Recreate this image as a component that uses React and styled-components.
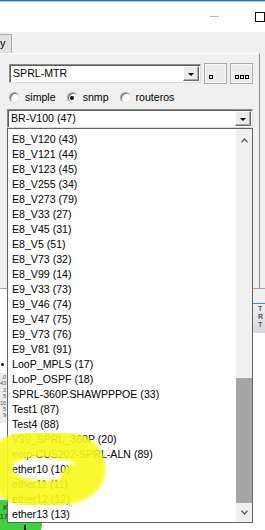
import React from 'react'
import styled, { createGlobalStyle } from 'styled-components'

const GlobalStyle = createGlobalStyle`
  *, *::before, *::after { box-sizing: border-box; }
  html, body { margin: 0; padding: 0; background: #fff; }
  body { width: 265px; height: 530px; overflow: hidden; }
`

const interfaces = [
  'E8_V120 (43)', 'E8_V121 (44)', 'E8_V123 (45)', 'E8_V255 (34)', 'E8_V273 (79)',
  'E8_V33 (27)', 'E8_V45 (31)', 'E8_V5 (51)', 'E8_V73 (32)', 'E8_V99 (14)',
  'E9_V33 (73)', 'E9_V46 (74)', 'E9_V47 (75)', 'E9_V73 (76)', 'E9_V81 (91)',
  'LooP_MPLS (17)', 'LooP_OSPF (18)', 'SPRL-360P.SHAWPPPOE (33)', 'Test1 (87)', 'Test4 (88)',
  'V99_SPRL_360P (20)', 'eoip-CUS202-SPRL-ALN (89)', 'ether10 (10)', 'ether11 (11)', 'ether12 (12)',
  'ether13 (13)',
]

function App() {
  return (
    <Screen>
      <GlobalStyle />
      <TitleBar>
        <MinDash />
        <MaxBox />
      </TitleBar>

      <Dialog>
        <TabStrip>
          <Tab>y</Tab>
        </TabStrip>
        <Panel>
          <Row>
            <Combo $w={192}>
              <ComboText>SPRL-MTR</ComboText>
              <DropBtn><Arrow /></DropBtn>
            </Combo>
            <SquareBtn><Glyph /></SquareBtn>
            <SquareBtn><Glyph /><Glyph /><Glyph /></SquareBtn>
          </Row>
          <RadioRow>
            <RadioLabel><RadioDot />simple</RadioLabel>
            <RadioLabel><RadioDot $checked />snmp</RadioLabel>
            <RadioLabel><RadioDot />routeros</RadioLabel>
          </RadioRow>
          <Combo $w={246} $ml={-2} $mt={5}>
            <ComboText>BR-V100 (47)</ComboText>
            <DropBtn><Arrow /></DropBtn>
          </Combo>
        </Panel>
      </Dialog>

      <Canvas>
        <MapDot style={{ left: 1, top: 74 }} />
        <TinyNode style={{ left: -22, top: 84 }}>
          <span>.0</span><span>43</span><span>2</span><span>5</span><span>16</span><span>5</span><span>9</span>
        </TinyNode>
        <GreenNode style={{ left: -32, top: 211 }}>
          <span>K</span><span>17</span>
        </GreenNode>
        <NodeTick style={{ left: 24, top: 236 }} />
        <RightPane>
          <GreyBand />
          <BlueRule />
          <HeaderBand>
            <b>T</b><b>R</b><b>T</b>
          </HeaderBand>
        </RightPane>
      </Canvas>

      <DropList>
        <Items>
          {interfaces.map((name) => (
            <Item key={name}>{name}</Item>
          ))}
        </Items>
        <ScrollBar>
          <ScrollArrow $up>
            <svg width="7" height="5" viewBox="0 0 7 5">
              <polyline points="0.5,4.2 3.5,1 6.5,4.2" fill="none" stroke="#606060" strokeWidth="1.4" />
            </svg>
          </ScrollArrow>
          <Track>
            <Thumb />
          </Track>
          <ScrollArrow>
            <svg width="7" height="5" viewBox="0 0 7 5">
              <polyline points="0.5,0.8 3.5,4 6.5,0.8" fill="none" stroke="#606060" strokeWidth="1.4" />
            </svg>
          </ScrollArrow>
        </ScrollBar>
      </DropList>

      <Highlight viewBox="0 0 265 530" width="265" height="530">
        <defs>
          <filter id="soft" x="-20%" y="-20%" width="140%" height="140%">
            <feGaussianBlur stdDeviation="1.4" />
          </filter>
        </defs>
        <g filter="url(#soft)" opacity="0.9" fill="none" stroke="#f9f91c" strokeLinecap="round">
          <path
            d="M 74 478 C 95 476 99 450 68 446 C 40 441 6 443 0 462 C -5 481 14 495 44 494 C 72 493 93 486 92 468 C 91 454 78 447 60 446"
            strokeWidth="27"
          />
          <path d="M 68 476 C 76 480 82 484 86 488" strokeWidth="9" />
        </g>
      </Highlight>
    </Screen>
  )
}

export default App

const Screen = styled.div`
  position: relative;
  width: 265px;
  height: 530px;
  overflow: hidden;
  display: flex;
  flex-direction: column;
  background: #fff;
  font-family: "Liberation Sans", Arial, sans-serif;
  font-size: 10.6px;
  color: #000;
`

const TitleBar = styled.div`
  flex: none;
  height: 32px;
  border-top: 1px solid #2f74c2;
  box-shadow: inset 0 1px 0 #a9c8ea;
  background: #fff;
  display: flex;
  align-items: center;
  padding-left: 210px;
  gap: 36px;
`

const MinDash = styled.span`
  width: 10px;
  height: 1px;
  background: #b9b9b9;
`

const MaxBox = styled.span`
  flex: none;
  width: 10px;
  height: 10px;
  border: 1px solid #111;
`

const Dialog = styled.div`
  flex: none;
  height: 257px;
  background: #f0f0f0;
  border-bottom: 1px solid #a3a3a3;
  display: flex;
  flex-direction: column;
`

const TabStrip = styled.div`
  height: 21px;
  display: flex;
  align-items: flex-end;
`

const Tab = styled.div`
  width: 12px;
  height: 19px;
  background: #e2e2e2;
  border: 1px solid #adadad;
  border-left: none;
  border-bottom: none;
  line-height: 17px;
  padding-left: 0;
  font-size: 11px;
`

const Panel = styled.div`
  flex: 1;
  width: 260px;
  border-top: 1px solid #fff;
  border-right: 1px solid #8f8f8f;
  padding: 9px 0 0 9px;
  display: flex;
  flex-direction: column;
`

const Row = styled.div`
  display: flex;
  align-items: center;
  gap: 3px;
  height: 21px;
`

const Combo = styled.div`
  width: ${(p) => p.$w}px;
  height: 19px;
  margin-left: ${(p) => p.$ml || 0}px;
  margin-top: ${(p) => p.$mt || 0}px;
  display: flex;
  align-items: stretch;
  justify-content: space-between;
  background: #fff;
  border: 1px solid;
  border-color: #8a8a8a #dcdcdc #dcdcdc #8a8a8a;
  box-shadow: inset 1px 1px 0 #5e5e5e;
  padding: 1px 1px 1px 2px;
`

const ComboText = styled.span`
  line-height: 15px;
  padding-left: 1px;
  white-space: nowrap;
`

const DropBtn = styled.span`
  width: 16px;
  display: flex;
  align-items: center;
  justify-content: center;
  background: #ececec;
  border: 1px solid;
  border-color: #fdfdfd #6a6a6a #6a6a6a #fdfdfd;
  box-shadow: inset -1px -1px 0 #a8a8a8;
`

const Arrow = styled.span`
  width: 0;
  height: 0;
  margin-top: 1px;
  border-left: 3px solid transparent;
  border-right: 3px solid transparent;
  border-top: 3px solid #000;
`

const SquareBtn = styled.span`
  width: 23px;
  height: 21px;
  display: flex;
  align-items: flex-end;
  gap: 1px;
  padding: 0 0 4px 4px;
  background: #ebebeb;
  border: 1px solid #ababab;
  box-shadow: inset 0 0 0 1px #f7f7f7;
`

const Glyph = styled.span`
  width: 4px;
  height: 4px;
  border: 1px solid #000;
`

const RadioRow = styled.div`
  display: flex;
  align-items: center;
  gap: 11px;
  height: 13px;
  margin-top: 7px;
`

const RadioLabel = styled.label`
  display: flex;
  align-items: center;
  gap: 5px;
  line-height: 13px;
`

const RadioDot = styled.span`
  width: 11px;
  height: 11px;
  border-radius: 50%;
  background: #fff;
  border: 1px solid;
  border-color: #a3a3a3 #e6e6e6 #e6e6e6 #a3a3a3;
  box-shadow: inset 1px 1px 0 #6e6e6e;
  display: flex;
  align-items: center;
  justify-content: center;
  &::after {
    content: '';
    width: 4px;
    height: 4px;
    border-radius: 50%;
    background: ${(p) => (p.$checked ? '#000' : 'transparent')};
  }
`

const Canvas = styled.div`
  position: relative;
  flex: 1;
  display: flex;
  justify-content: flex-end;
  background: #fff;
`

const MapDot = styled.span`
  position: absolute;
  width: 3px;
  height: 3px;
  border-radius: 50%;
  background: #111;
`

const TinyNode = styled.div`
  position: absolute;
  width: 29px;
  height: 50px;
  display: flex;
  flex-direction: column;
  align-items: flex-end;
  padding: 1px 1px 0 0;
  background: #ececec;
  font-size: 5.5px;
  line-height: 6.4px;
  color: #555;
`

const GreenNode = styled.div`
  position: absolute;
  width: 74px;
  height: 40px;
  border-radius: 16px;
  background: #3fd23f;
  display: flex;
  flex-direction: column;
  align-items: flex-end;
  padding: 4px 34px 0 0;
  font-size: 7.5px;
  line-height: 8.5px;
  color: #222;
`

const NodeTick = styled.span`
  position: absolute;
  width: 2px;
  height: 8px;
  background: #111;
`

const RightPane = styled.div`
  width: 12px;
  display: flex;
  flex-direction: column;
`

const GreyBand = styled.div`
  height: 14px;
  background: #f0f0f0;
`

const BlueRule = styled.div`
  height: 1px;
  background: #3d8fe0;
`

const HeaderBand = styled.div`
  height: 29px;
  background: linear-gradient(#f2f2f2, #d9d9d9);
  display: flex;
  flex-direction: column;
  padding: 1px 0 0 5px;
  font-size: 7px;
  line-height: 8px;
  color: #555;
`

const DropList = styled.div`
  position: absolute;
  left: 7px;
  top: 128px;
  width: 246px;
  height: 395px;
  display: flex;
  background: #fff;
  border: 1px solid #646464;
`

const Items = styled.ul`
  flex: 1;
  margin: 0;
  padding: 3px 0 0 4px;
  list-style: none;
`

const Item = styled.li`
  height: 15px;
  line-height: 15px;
  white-space: nowrap;
`

const ScrollBar = styled.div`
  width: 16px;
  display: flex;
  flex-direction: column;
  background: #f0f0f0;
`

const ScrollArrow = styled.div`
  height: 17px;
  display: flex;
  justify-content: center;
  align-items: ${(p) => (p.$up ? 'flex-start' : 'flex-end')};
  padding: ${(p) => (p.$up ? '9px 0 0' : '0 0 7px')};
`

const Track = styled.div`
  flex: 1;
  display: flex;
  flex-direction: column;
`

const Thumb = styled.div`
  margin: 232px 0 0 0;
  height: 125px;
  background: #a6a6a6;
`

const Highlight = styled.svg`
  position: absolute;
  left: 0;
  top: 0;
  pointer-events: none;
`
